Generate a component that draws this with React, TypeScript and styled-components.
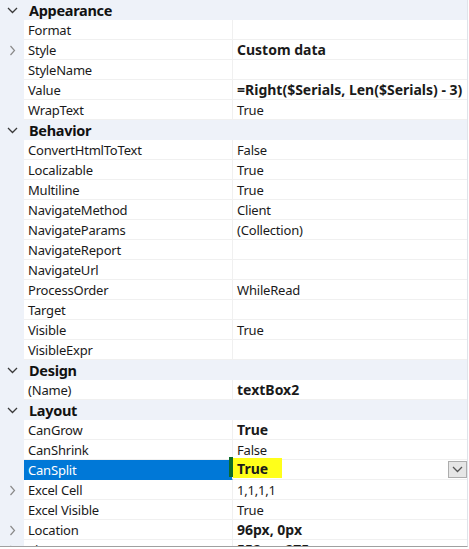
import styled, { createGlobalStyle } from 'styled-components';
import { FC } from 'react';

const GlobalStyle = createGlobalStyle`
  body {
    margin: 0;
    background: #ffffff;
    font-family: "Noto Sans", "Open Sans", sans-serif;
  }
`;

const Grid = styled.div`
  width: 467px;
  height: 546px;
  overflow: hidden;
  border-right: 1px solid #dfe3ea;
  border-bottom: 1px solid #a0a0a0;
  background: #ffffff;
`;

const Category = styled.div`
  display: flex;
  align-items: center;
  height: 20px;
  background: #eef2f9;
  font-size: 14.5px;
  font-weight: 700;
  color: #111111;
`;

const Gutter = styled.div`
  width: 24px;
  height: 100%;
  flex: none;
  display: flex;
  align-items: center;
  justify-content: center;
  background: #eef2f9;
`;

const CategoryLabel = styled.span`
  padding-left: 5px;
  letter-spacing: -0.3px;
`;

const Row = styled.div`
  display: flex;
  height: 20px;
  font-size: 13px;
  color: #1a1a1a;
`;

const NameCell = styled.div<{ $selected?: boolean }>`
  width: 209px;
  flex: none;
  box-sizing: border-box;
  padding-left: 4px;
  display: flex;
  align-items: center;
  border-bottom: 1px solid ${p => (p.$selected ? '#0078d7' : '#f0f0f0')};
  border-right: 1px solid #f0f0f0;
  background: ${p => (p.$selected ? '#0078d7' : '#ffffff')};
  color: ${p => (p.$selected ? '#ffffff' : '#1a1a1a')};
  letter-spacing: -0.2px;
  white-space: nowrap;
  position: relative;
`;

const ValueCell = styled.div<{ $bold?: boolean }>`
  flex: 1;
  min-width: 0;
  box-sizing: border-box;
  padding-left: 4px;
  display: flex;
  align-items: center;
  border-bottom: 1px solid #f0f0f0;
  font-weight: ${p => (p.$bold ? 700 : 400)};
  font-size: ${p => (p.$bold ? '14px' : '13px')};
  letter-spacing: ${p => (p.$bold ? '0' : '-0.2px')};
  white-space: nowrap;
`;

const GreenMark = styled.span`
  position: absolute;
  right: -1px;
  top: -3px;
  width: 4px;
  height: 20px;
  background: #0b6b2a;
`;

const Highlight = styled.span`
  display: inline-flex;
  align-items: center;
  height: 20px;
  margin: -3px 0 0 -4px;
  padding: 0 14px 0 4px;
  background: #ffff1a;
`;

const DropButton = styled.span`
  margin-left: auto;
  width: 19px;
  height: 17px;
  box-sizing: border-box;
  border: 1px solid #adadad;
  background: #e6e6e6;
  display: flex;
  align-items: center;
  justify-content: center;
`;

const ChevronDown: FC<{ color?: string }> = ({ color = '#3a3a3a' }) => (
  <svg width="11" height="7" viewBox="0 0 11 7">
    <path d="M1 1 L5.5 5.5 L10 1" fill="none" stroke={color} strokeWidth="1.3" />
  </svg>
);

const ChevronRight: FC = () => (
  <svg width="7" height="11" viewBox="0 0 7 11">
    <path d="M1.5 1 L5.5 5.5 L1.5 10" fill="none" stroke="#8a8a8a" strokeWidth="1.2" />
  </svg>
);

type Prop = {
  name: string;
  value?: string;
  bold?: boolean;
  expand?: boolean;
  selected?: boolean;
};

type Section = { title: string; props: Prop[] };

const sections: Section[] = [
  {
    title: 'Appearance',
    props: [
      { name: 'Format' },
      { name: 'Style', value: 'Custom data', bold: true, expand: true },
      { name: 'StyleName' },
      { name: 'Value', value: '=Right($Serials, Len($Serials) - 3)', bold: true },
      { name: 'WrapText', value: 'True' },
    ],
  },
  {
    title: 'Behavior',
    props: [
      { name: 'ConvertHtmlToText', value: 'False' },
      { name: 'Localizable', value: 'True' },
      { name: 'Multiline', value: 'True' },
      { name: 'NavigateMethod', value: 'Client' },
      { name: 'NavigateParams', value: '(Collection)' },
      { name: 'NavigateReport' },
      { name: 'NavigateUrl' },
      { name: 'ProcessOrder', value: 'WhileRead' },
      { name: 'Target' },
      { name: 'Visible', value: 'True' },
      { name: 'VisibleExpr' },
    ],
  },
  {
    title: 'Design',
    props: [{ name: '(Name)', value: 'textBox2', bold: true }],
  },
  {
    title: 'Layout',
    props: [
      { name: 'CanGrow', value: 'True', bold: true },
      { name: 'CanShrink', value: 'False' },
      { name: 'CanSplit', value: 'True', bold: true, selected: true },
      { name: 'Excel Cell', value: '1,1,1,1', expand: true },
      { name: 'Excel Visible', value: 'True' },
      { name: 'Location', value: '96px, 0px', bold: true, expand: true },
      { name: 'Size', value: '552px, 275px', bold: true, expand: true },
    ],
  },
];

const PropertyRow: FC<{ prop: Prop }> = ({ prop }) => (
  <Row>
    <Gutter>{prop.expand && <ChevronRight />}</Gutter>
    <NameCell $selected={prop.selected}>
      {prop.name}
      {prop.selected && <GreenMark />}
    </NameCell>
    <ValueCell $bold={prop.bold}>
      {prop.selected ? (
        <>
          <Highlight>{prop.value}</Highlight>
          <DropButton>
            <ChevronDown color="#555555" />
          </DropButton>
        </>
      ) : (
        prop.value
      )}
    </ValueCell>
  </Row>
);

export default function App() {
  return (
    <>
      <GlobalStyle />
      <Grid>
        {sections.map(section => (
          <div key={section.title}>
            <Category>
              <Gutter>
                <ChevronDown />
              </Gutter>
              <CategoryLabel>{section.title}</CategoryLabel>
            </Category>
            {section.props.map(p => (
              <PropertyRow key={p.name} prop={p} />
            ))}
          </div>
        ))}
      </Grid>
    </>
  );
}
